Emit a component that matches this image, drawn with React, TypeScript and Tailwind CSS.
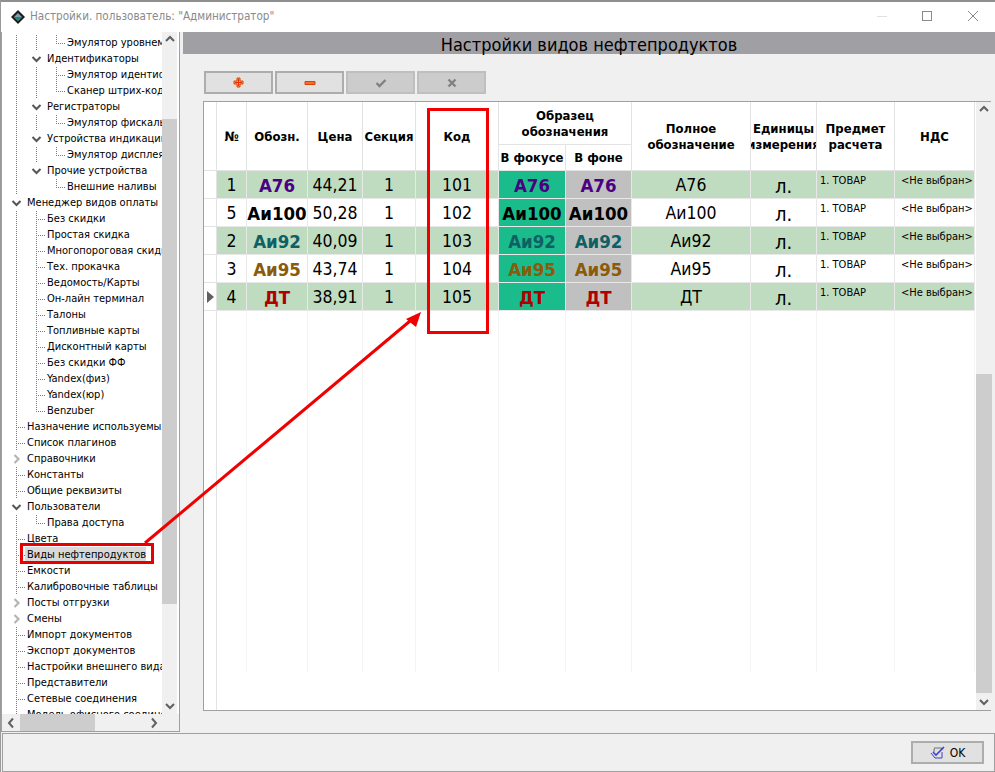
type Row = { t: string; lv: number; e?: "open" | "closed"; g1?: boolean; end?: boolean; sel?: boolean };

const treeRows: Row[] = [
  { t: "Эмулятор уровнем", lv: 2, g1: true, end: true },
  { t: "Идентификаторы", lv: 1, e: "open" },
  { t: "Эмулятор идентиф", lv: 2, g1: true },
  { t: "Сканер штрих-код", lv: 2, g1: true, end: true },
  { t: "Регистраторы", lv: 1, e: "open" },
  { t: "Эмулятор фискаль", lv: 2, g1: true, end: true },
  { t: "Устройства индикации", lv: 1, e: "open" },
  { t: "Эмулятор дисплея", lv: 2, g1: true, end: true },
  { t: "Прочие устройства", lv: 1, e: "open" },
  { t: "Внешние наливы", lv: 2, end: true },
  { t: "Менеджер видов оплаты", lv: 0, e: "open" },
  { t: "Без скидки", lv: 1 },
  { t: "Простая скидка", lv: 1 },
  { t: "Многопороговая скидка", lv: 1 },
  { t: "Тех. прокачка", lv: 1 },
  { t: "Ведомость/Карты", lv: 1 },
  { t: "Он-лайн терминал", lv: 1 },
  { t: "Талоны", lv: 1 },
  { t: "Топливные карты", lv: 1 },
  { t: "Дисконтный карты", lv: 1 },
  { t: "Без скидки ФФ", lv: 1 },
  { t: "Yandex(физ)", lv: 1 },
  { t: "Yandex(юр)", lv: 1 },
  { t: "Benzuber", lv: 1, end: true },
  { t: "Назначение используемых", lv: 0 },
  { t: "Список плагинов", lv: 0 },
  { t: "Справочники", lv: 0, e: "closed" },
  { t: "Константы", lv: 0 },
  { t: "Общие реквизиты", lv: 0 },
  { t: "Пользователи", lv: 0, e: "open" },
  { t: "Права доступа", lv: 1, end: true },
  { t: "Цвета", lv: 0 },
  { t: "Виды нефтепродуктов", lv: 0, sel: true },
  { t: "Емкости", lv: 0 },
  { t: "Калибровочные таблицы", lv: 0 },
  { t: "Посты отгрузки", lv: 0, e: "closed" },
  { t: "Смены", lv: 0, e: "closed" },
  { t: "Импорт документов", lv: 0 },
  { t: "Экспорт документов", lv: 0 },
  { t: "Настройки внешнего вида", lv: 0 },
  { t: "Представители", lv: 0 },
  { t: "Сетевые соединения", lv: 0 },
  { t: "Модель офисного соединения", lv: 0 },
];

const products = [
  { id: "А76", no: "1", price: "44,21", code: "101", color: "text-[#4b0082]", green: true },
  { id: "Аи100", no: "5", price: "50,28", code: "102", color: "text-black", green: false },
  { id: "Аи92", no: "2", price: "40,09", code: "103", color: "text-[#0f6064]", green: true },
  { id: "Аи95", no: "3", price: "43,74", code: "104", color: "text-[#8b5a0a]", green: false },
  { id: "ДТ", no: "4", price: "38,91", code: "105", color: "text-[#b00000]", green: true },
];

const dots = { stroke: "#7a7a7a", strokeDasharray: "1 1", strokeWidth: 1 };

function Chevron({ x, open }: { x: number; open: boolean }) {
  return open ? (
    <path d={`M${x - 4} 6l4 4 4-4`} fill="none" stroke="#555" strokeWidth="2" />
  ) : (
    <path d={`M${x - 2} 4l4 4-4 4`} fill="none" stroke="#b5b5b5" strokeWidth="2.2" />
  );
}

function TreeGuides({ r }: { r: Row }) {
  const w = 23 + 20 * r.lv;
  const branch = 14 + 20 * r.lv;
  return (
    <svg width={w} height="16" className="shrink-0">
      {!(r.lv === 0 && r.e) && <line x1="14.5" y1="0" x2="14.5" y2="16" {...dots} />}
      {r.lv === 2 && r.g1 && <line x1="34.5" y1="0" x2="34.5" y2="16" {...dots} />}
      {r.e ? (
        <>
          <Chevron x={branch + 0.5} open={r.e === "open"} />
          <line x1={branch + 9} y1="8.5" x2={branch + 11} y2="8.5" {...dots} />
        </>
      ) : (
        <>
          {r.lv > 0 && (
            <line x1={branch + 0.5} y1="0" x2={branch + 0.5} y2={r.end ? 8 : 16} {...dots} />
          )}
          <line x1={branch} y1="8.5" x2={branch + 11} y2="8.5" {...dots} />
        </>
      )}
    </svg>
  );
}

function ScrollArrow({ dir }: { dir: "up" | "down" | "left" | "right" }) {
  const d = {
    up: "M4 9l4-4 4 4",
    down: "M4 6l4 4 4-4",
    left: "M10 3.5l-4 4.5 4 4.5",
    right: "M6 3.5l4 4.5-4 4.5",
  }[dir];
  return (
    <svg width="16" height="16" className="shrink-0">
      <path d={d} fill="none" stroke="#606060" strokeWidth="2" />
    </svg>
  );
}

function TreePanel() {
  return (
    <div className="w-[179px] shrink-0 flex flex-col border-x border-b border-x-[#a0a0a0] border-b-[#a0a0a0] bg-white">
      <div className="flex h-[682px]">
        <div className="flex-1 min-w-0 overflow-hidden pt-[3px] text-[11px] text-black">
          {treeRows.map((r) => (
            <div key={r.t} className="flex h-4 items-center whitespace-nowrap">
              <TreeGuides r={r} />
              <span className={r.sel ? "px-[2px] w-[121px] leading-4 bg-[#d9d9d9]" : "px-[2px] leading-4"}>{r.t}</span>
            </div>
          ))}
        </div>
        <div className="w-[15px] mr-[2px] shrink-0 flex flex-col bg-[#f0f0f0]">
          <ScrollArrow dir="up" />
          <div className="flex-1 flex flex-col pt-[71px] pb-[94px]">
            <div className="flex-1 bg-[#cdcdcd]" />
          </div>
          <ScrollArrow dir="down" />
        </div>
      </div>
      <div className="flex h-[17px] items-center bg-[#f0f0f0]">
        <div className="w-[18px] flex justify-center">
          <ScrollArrow dir="left" />
        </div>
        <div className="w-[75px] h-full bg-[#cdcdcd]" />
        <div className="flex-1" />
        <ScrollArrow dir="right" />
        <div className="w-[17px]" />
      </div>
    </div>
  );
}

const btn = "w-[69px] h-[23px] flex items-center justify-center border-2";

function ToolbarIcon({ kind }: { kind: "plus" | "minus" | "check" | "x" }) {
  return (
    <svg width="14" height="14" viewBox="0 0 14 14">
      {kind === "plus" && (
        <>
          <path d="M5 2h3v3h3v3H8v3H5V8H2V5h3z" fill="#f0a070" stroke="#e04000" strokeWidth="1" />
          <path d="M6.5 3v7M3 6.5h7" stroke="#e83000" strokeWidth="1" />
        </>
      )}
      {kind === "minus" && <path d="M2 5.5h10v3H2z" fill="#f07030" stroke="#e04000" strokeWidth="1" />}
      {kind === "check" && <path d="M2.5 7l3 3 6-6" fill="none" stroke="#808080" strokeWidth="2.4" />}
      {kind === "x" && <path d="M3.5 3.5l7 7M10.5 3.5l-7 7" fill="none" stroke="#808080" strokeWidth="2.4" />}
    </svg>
  );
}

const hc = "flex items-center justify-center text-center font-bold text-[13px] leading-4 border-r border-b border-[#e3e3e3]";
const dc = "h-[28px] pt-[2px] flex items-center justify-center text-[17.5px] border-r border-b border-[#e8e8e8] whitespace-nowrap overflow-hidden";
const smallc = "h-[28px] pt-[2px] text-[11px] leading-[16px] border-r border-b border-[#e8e8e8] whitespace-nowrap overflow-hidden";
const idc = "h-[28px] pt-[2px] flex items-center justify-center font-bold text-[18.5px] border-r border-b border-[#e8e8e8] whitespace-nowrap overflow-hidden";

function Grid() {
  return (
    <div className="ml-5 mt-[7px] mr-1 h-[610px] flex border border-[#a0a0a0] bg-white">
      <div className="w-[771px] shrink-0 grid grid-cols-[13px_30px_61px_55px_53px_83px_67px_66px_119px_66px_78px_80px] grid-rows-[43px_26px_repeat(5,28px)_1fr] text-black">
        <div className={`${hc} row-span-2`} />
        <div className={`${hc} row-span-2 pt-[2px]`}>№</div>
        <div className={`${hc} row-span-2 pt-[2px]`}>Обозн.</div>
        <div className={`${hc} row-span-2 pt-[2px]`}>Цена</div>
        <div className={`${hc} row-span-2 pt-[2px]`}>Секция</div>
        <div className={`${hc} row-span-2 pt-[2px]`}>Код</div>
        <div className={`${hc} col-span-2 pt-[1px]`}>
          Образец
          <br />
          обозначения
        </div>
        <div className={`${hc} row-span-2 pt-[2px]`}>
          Полное
          <br />
          обозначение
        </div>
        <div className={`${hc} row-span-2 pt-[2px] flex-col overflow-hidden whitespace-nowrap`}>
          <span>Единицы</span>
          <span>измерения</span>
        </div>
        <div className={`${hc} row-span-2 pt-[2px]`}>
          Предмет
          <br />
          расчета
        </div>
        <div className={`${hc} row-span-2 pt-[2px]`}>НДС</div>
        <div className={hc}>В фокусе</div>
        <div className={hc}>В фоне</div>

        {products.map((p) => {
          const bg = p.green ? "bg-[#c0dcc0]" : "bg-white";
          return (
            <div key={p.code} className="contents">
              <div className="h-[28px] flex items-center border-r border-b border-[#e3e3e3] bg-white pl-[3px]">
                {p.no === "4" && (
                  <svg width="7" height="12">
                    <path d="M0 0l7 6-7 6z" fill="#606060" />
                  </svg>
                )}
              </div>
              <div className={`${dc} ${bg}`}>{p.no}</div>
              <div className={`${idc} ${bg} ${p.color}`}>{p.id}</div>
              <div className={`${dc} ${bg}`}>{p.price}</div>
              <div className={`${dc} ${bg}`}>1</div>
              <div className={`${dc} ${bg}`}>{p.code}</div>
              <div className={`${idc} bg-[#1abc8c] ${p.color}`}>{p.id}</div>
              <div className={`${idc} bg-[#c0c0c0] ${p.color}`}>{p.id}</div>
              <div className={`${dc} ${bg}`}>{p.id}</div>
              <div className={`${dc} ${bg} text-[20px] font-medium`}>л.</div>
              <div className={`${smallc} ${bg} pl-[3px]`}>1. ТОВАР</div>
              <div className={`${smallc} ${bg} pl-[6px]`}>{"<Не выбран>"}</div>
            </div>
          );
        })}

        <div className="border-r border-[#e3e3e3]" />
        {Array.from({ length: 11 }, (_, i) => (
          <div key={i} className="border-r border-[#f4f4f4] mb-[38px]" />
        ))}
      </div>
      <div className="w-4 ml-[1px] shrink-0 flex flex-col bg-[#f0f0f0]">
        <ScrollArrow dir="up" />
        <div className="flex-1 flex flex-col pt-[256px] pb-[1px]">
          <div className="flex-1 bg-[#cdcdcd]" />
        </div>
        <ScrollArrow dir="down" />
      </div>
    </div>
  );
}

export default function App() {
  return (
    <div className="relative w-[995px] h-[772px] overflow-hidden flex flex-col bg-[#f0f0f0] border-l border-[#9a9a9a] font-['DejaVu_Sans_Condensed','DejaVu_Sans',sans-serif]">
      <div className="h-[2px] shrink-0 bg-[#8f8f8f]" />
      <div className="h-[30px] shrink-0 flex items-center bg-white pl-[9px]">
        <svg width="16" height="16" viewBox="0 0 16 16" className="shrink-0">
          <path d="M8 1l7 7-7 7-7-7z" fill="#1c1c1c" />
          <path d="M8 4l4 4-4 4-4-4z" fill="#7da0b0" />
          <path d="M8 8l4 0-4 4-4-4z" fill="#1a8a70" />
        </svg>
        <span className="ml-[4px] text-[11.6px] text-[#8a8a8a]">Настройки. пользователь: "Администратор"</span>
        <div className="flex-1" />
        <svg width="102" height="14" className="mr-[16px]">
          <line x1="0" y1="6.5" x2="10" y2="6.5" stroke="#e0e0e0" />
          <rect x="45.5" y="1.5" width="9" height="9" fill="none" stroke="#8a8a8a" />
          <path d="M91 1l10 10M101 1L91 11" stroke="#8a8a8a" fill="none" />
        </svg>
      </div>

      <div className="flex h-[700px] shrink-0">
        <TreePanel />
        <div className="flex-1 ml-[3px] flex flex-col min-w-0">
          <div className="h-[22px] shrink-0 pt-[2px] flex items-center justify-center bg-[#a09fa4] text-[18px] text-black">
            Настройки видов нефтепродуктов
          </div>
          <div className="ml-[21px] mt-[17px] flex gap-[2px]">
            <div className={`${btn} bg-[#e1e1e1] border-[#adadad]`}>
              <ToolbarIcon kind="plus" />
            </div>
            <div className={`${btn} bg-[#e1e1e1] border-[#adadad]`}>
              <ToolbarIcon kind="minus" />
            </div>
            <div className={`${btn} bg-[#cccccc] border-[#bfbfbf]`}>
              <ToolbarIcon kind="check" />
            </div>
            <div className={`${btn} bg-[#cccccc] border-[#bfbfbf]`}>
              <ToolbarIcon kind="x" />
            </div>
          </div>
          <Grid />
        </div>
      </div>

      <div className="mt-[1px] ml-[1px] flex-1 flex items-center justify-end border border-[#a0a0a0] pr-[10px]">
        <div className="w-[73px] h-[23px] flex items-center justify-center gap-[4px] bg-[#e1e1e1] border-2 border-[#adadad] text-[12px] text-black">
          <svg width="16" height="14" viewBox="0 0 16 14">
            <path d="M1 7l4 5h7V6" fill="none" stroke="#4040c0" strokeWidth="1" />
            <path d="M4 2h8v2M5 3H4v3" fill="none" stroke="#707070" strokeWidth="1" />
            <path d="M3 6l3 3 8-8" fill="none" stroke="#4040d0" strokeWidth="1.6" />
          </svg>
          OK
        </div>
      </div>

      <div className="absolute left-[426px] top-[108px] w-[62px] h-[226px] border-[3px] border-[#f00000]" />
      <div className="absolute left-[19px] top-[543px] w-[134px] h-[21px] border-[3px] border-[#e80000]" />
      <svg width="995" height="772" className="absolute left-0 top-0 pointer-events-none">
        <line x1="144" y1="543" x2="412" y2="318.5" stroke="#f00000" strokeWidth="3" />
        <path d="M420 312L405 319L415 327z" fill="#f00000" />
      </svg>
    </div>
  );
}
